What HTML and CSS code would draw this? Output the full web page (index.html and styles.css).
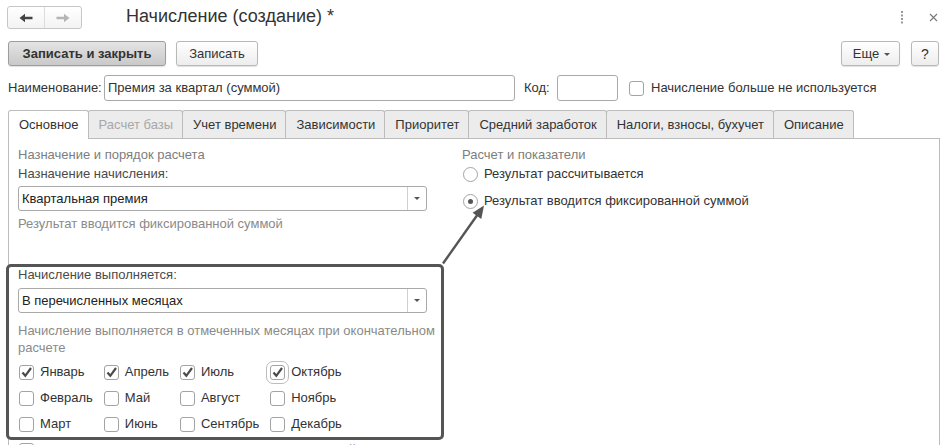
FILE: index.html
```html
<!DOCTYPE html>
<html lang="ru">
<head>
<meta charset="utf-8">
<title>Начисление (создание)</title>
<link rel="stylesheet" href="styles.css">
</head>
<body>
<header class="titlebar">
  <div class="nav">
    <span class="nav-btn nav-back">
      <svg width="14" height="10" viewBox="0 0 14 10"><path d="M0.5 5 L6 0.8 L6 3.8 L13.5 3.8 L13.5 6.2 L6 6.2 L6 9.2 Z" fill="#444"/></svg>
    </span>
    <span class="nav-btn">
      <svg width="14" height="10" viewBox="0 0 14 10"><path d="M13.5 5 L8 0.8 L8 3.8 L0.5 3.8 L0.5 6.2 L8 6.2 L8 9.2 Z" fill="#b5b5b5"/></svg>
    </span>
  </div>
  <h1 class="title">Начисление (создание) *</h1>
  <div class="win-ctrls">
    <svg class="kebab" width="4" height="13" viewBox="0 0 4 13"><rect x="1" y="0" width="2" height="2" fill="#999"/><rect x="1" y="3.5" width="2" height="2" fill="#999"/><rect x="1" y="7" width="2" height="2" fill="#999"/><rect x="1" y="10.5" width="2" height="2" fill="#999"/></svg>
    <svg class="close" width="9" height="9" viewBox="0 0 9 9"><path d="M1 1 L8 8 M8 1 L1 8" stroke="#777" stroke-width="1.1"/></svg>
  </div>
</header>

<div class="toolbar">
  <button class="btn btn-primary">Записать и закрыть</button>
  <button class="btn btn-save">Записать</button>
  <button class="btn btn-more">Еще <span class="caret"></span></button>
  <button class="btn btn-help">?</button>
</div>

<div class="fields">
  <span class="name-label">Наименование:</span>
  <span class="input input-name">Премия за квартал (суммой)</span>
  <span class="code-label">Код:</span>
  <span class="input input-code"></span>
  <span class="cb cb-free"></span>
  <span class="cb-text">Начисление больше не используется</span>
</div>

<nav class="tabs">
  <span class="tab active">Основное</span>
  <span class="tab disabled">Расчет базы</span>
  <span class="tab">Учет времени</span>
  <span class="tab">Зависимости</span>
  <span class="tab">Приоритет</span>
  <span class="tab">Средний заработок</span>
  <span class="tab">Налоги, взносы, бухучет</span>
  <span class="tab">Описание</span>
</nav>

<main class="panel">
  <div class="col-left">
    <div class="group-title">Назначение и порядок расчета</div>
    <div class="label label-first">Назначение начисления:</div>
    <div class="select"><span class="select-text">Квартальная премия</span><span class="select-btn"><span class="tri"></span></span></div>
    <div class="note">Результат вводится фиксированной суммой</div>

    <section class="highlight">
      <div class="label">Начисление выполняется:</div>
      <div class="select select-2"><span class="select-text">В перечисленных месяцах</span><span class="select-btn"><span class="tri"></span></span></div>
      <div class="desc">Начисление выполняется в отмеченных месяцах при окончательном расчете</div>
      <div class="months">
        <label class="month"><span class="cb checked"><svg width="13" height="13" viewBox="0 0 13 13"><path d="M2.5 6.5 L5.3 9.8 L11 2" fill="none" stroke="#4a4a4a" stroke-width="2.2"/></svg></span>Январь</label>
        <label class="month"><span class="cb checked"><svg width="13" height="13" viewBox="0 0 13 13"><path d="M2.5 6.5 L5.3 9.8 L11 2" fill="none" stroke="#4a4a4a" stroke-width="2.2"/></svg></span>Апрель</label>
        <label class="month"><span class="cb checked"><svg width="13" height="13" viewBox="0 0 13 13"><path d="M2.5 6.5 L5.3 9.8 L11 2" fill="none" stroke="#4a4a4a" stroke-width="2.2"/></svg></span>Июль</label>
        <label class="month"><span class="cb checked focused"><svg width="13" height="13" viewBox="0 0 13 13"><path d="M2.5 6.5 L5.3 9.8 L11 2" fill="none" stroke="#4a4a4a" stroke-width="2.2"/></svg></span>Октябрь</label>
        <label class="month"><span class="cb"></span>Февраль</label>
        <label class="month"><span class="cb"></span>Май</label>
        <label class="month"><span class="cb"></span>Август</label>
        <label class="month"><span class="cb"></span>Ноябрь</label>
        <label class="month"><span class="cb"></span>Март</label>
        <label class="month"><span class="cb"></span>Июнь</label>
        <label class="month"><span class="cb"></span>Сентябрь</label>
        <label class="month"><span class="cb"></span>Декабрь</label>
      </div>
    </section>
    <label class="month extra"><span class="cb"></span>Выплачивать при окончательном расчете в текущий</label>
  </div>

  <div class="col-right">
    <div class="group-title">Расчет и показатели</div>
    <div class="radios">
      <label class="radio-row"><span class="radio"></span>Результат рассчитывается</label>
      <label class="radio-row"><span class="radio on"></span>Результат вводится фиксированной суммой</label>
    </div>
  </div>
</main>

<svg class="pointer" width="948" height="445" viewBox="0 0 948 445">
  <line x1="443" y1="263.5" x2="478" y2="214" stroke="#555" stroke-width="2.4"/>
  <polygon points="484,205.5 481.3,219 472.6,212.8" fill="#555"/>
</svg>
</body>
</html>
```

FILE: styles.css
```css
* { box-sizing: border-box; }

body {
  margin: 0;
  width: 948px;
  height: 445px;
  overflow: hidden;
  position: relative;
  background: #fff;
  color: #333;
  font: 13px/16px "Liberation Sans", Arial, sans-serif;
}

/* title bar */
.titlebar {
  display: flex;
  align-items: center;
  height: 35px;
  padding: 0 10px 0 7px;
}
.nav {
  display: flex;
  width: 75px;
  height: 23px;
  border: 1px solid #c6c6c6;
  border-radius: 3px;
  background: linear-gradient(#fff, #f3f3f3);
}
.nav-btn {
  flex: 1;
  display: flex;
  align-items: center;
  justify-content: center;
}
.nav-back { border-right: 1px solid #dcdcdc; }
.title {
  align-self: flex-start;
  margin: 5px 0 0 44px;
  font-size: 18px;
  line-height: 22px;
  font-weight: normal;
  color: #333;
}
.win-ctrls {
  margin-left: auto;
  display: flex;
  align-items: center;
  gap: 25px;
  margin-top: -1px;
}
.close { margin-top: 1px; }

/* toolbar */
.toolbar {
  display: flex;
  align-items: center;
  margin-top: 6px;
  padding: 0 9px 0 8px;
  height: 25px;
}
.btn {
  height: 25px;
  border: 1px solid #b8b8b8;
  border-radius: 3px;
  background: linear-gradient(#ffffff, #ededed);
  box-shadow: 0 1px 1px rgba(0, 0, 0, 0.12);
  font: inherit;
  color: #333;
  display: flex;
  align-items: center;
  justify-content: center;
  padding: 0;
}
.btn-primary {
  width: 158px;
  font-weight: bold;
  background: linear-gradient(#e4e4e4, #c9c9c9);
  border-color: #9d9d9d;
}
.btn-save { width: 82px; margin-left: 10px; }
.btn-more { width: 59px; margin-left: auto; gap: 5px; padding-left: 2px; }
.btn-help { width: 28px; margin-left: 11px; font-size: 14px; }
.caret {
  width: 0;
  height: 0;
  border-left: 3px solid transparent;
  border-right: 3px solid transparent;
  border-top: 3px solid #555;
  margin-top: 2px;
}

/* fields row */
.fields {
  display: flex;
  align-items: center;
  height: 26px;
  margin-top: 9px;
  padding-left: 8px;
}
.name-label { width: 96px; }
.input {
  height: 26px;
  border: 1px solid #a9a9a9;
  border-radius: 3px;
  padding: 4px 3px;
  background: #fff;
}
.input-name { width: 411px; }
.code-label { width: 33px; margin-left: 9px; }
.input-code { width: 61px; }
.cb-free { margin-left: 11px; }
.cb-text { margin-left: 7px; }

/* checkboxes */
.cb {
  width: 15px;
  height: 15px;
  flex: none;
  border: 1px solid #a3a3a3;
  border-radius: 3px;
  background: #fff;
  display: inline-flex;
  align-items: center;
  justify-content: center;
}
.cb.focused {
  outline: 1px solid #bdbdbd;
  outline-offset: 3px;
}

/* tabs */
.tabs {
  display: flex;
  align-items: flex-start;
  height: 28px;
  margin-top: 9px;
  padding-left: 8px;
}
.tab {
  height: 28px;
  padding: 0 9px 0 10px;
  border: 1px solid #bcbcbc;
  border-bottom: none;
  border-radius: 3px 3px 0 0;
  background: #ececec;
  display: flex;
  align-items: center;
  justify-content: center;
  margin-right: -1px;
  white-space: nowrap;
}
.tab.active {
  background: #fff;
  height: 29px;
  position: relative;
  z-index: 1;
}
.tab.disabled { color: #a8a8a8; }

/* panel */
.panel {
  display: flex;
  align-items: flex-start;
  margin: 0 8px;
  height: 320px;
  border: 1px solid #bcbcbc;
  border-bottom: none;
  padding: 8px 0 0 9px;
}
.col-left { width: 409px; flex: none; }
.col-right { margin-left: 35px; }

.group-title { color: #7d7d7d; }
.label { color: #4a4a4a; }
.label-first { margin-top: 3px; }
.note { margin-top: 5px; color: #8a8a8a; }

.select {
  display: flex;
  height: 25px;
  margin-top: 4px;
  border: 1px solid #a9a9a9;
  border-radius: 3px;
  background: #fff;
}
.select-text {
  flex: 1;
  padding: 0 3px;
  display: flex;
  align-items: center;
  color: #222;
}
.select-btn {
  width: 19px;
  border-left: 1px solid #d0d0d0;
  display: flex;
  align-items: center;
  justify-content: center;
}
.tri {
  width: 0;
  height: 0;
  border-left: 3px solid transparent;
  border-right: 3px solid transparent;
  border-top: 3px solid #555;
}

/* highlighted section */
.highlight {
  position: relative;
  margin-top: 35px;
}
.highlight::before {
  content: "";
  position: absolute;
  left: -12px;
  right: -17px;
  top: -3px;
  bottom: -3px;
  border: 3px solid #555;
  border-radius: 5px;
  pointer-events: none;
}
.select-2 { margin-top: 5px; }
.desc {
  margin-top: 9px;
  margin-right: -32px;
  line-height: 17px;
  color: #8a8a8a;
}
.months {
  margin-top: 3px;
  display: grid;
  grid-template-columns: repeat(4, auto);
  justify-content: start;
  column-gap: 10px;
  grid-auto-rows: 26px;
}
.month {
  display: flex;
  align-items: center;
  gap: 6px;
  padding-left: 1px;
  white-space: nowrap;
}
.extra { height: 26px; margin-top: 0; }

/* radios */
.radios {
  display: flex;
  flex-direction: column;
  gap: 7px;
  margin-top: 1px;
}
.radio-row {
  display: flex;
  align-items: center;
  height: 20px;
  gap: 6px;
  padding-left: 1px;
}
.radio {
  width: 15px;
  height: 15px;
  border: 1px solid #a3a3a3;
  border-radius: 50%;
  background: #fff;
  display: inline-flex;
  align-items: center;
  justify-content: center;
}
.radio.on::after {
  content: "";
  width: 5px;
  height: 5px;
  border-radius: 50%;
  background: #555;
}

/* annotation arrow */
.pointer {
  position: absolute;
  left: 0;
  top: 0;
  pointer-events: none;
}
```
